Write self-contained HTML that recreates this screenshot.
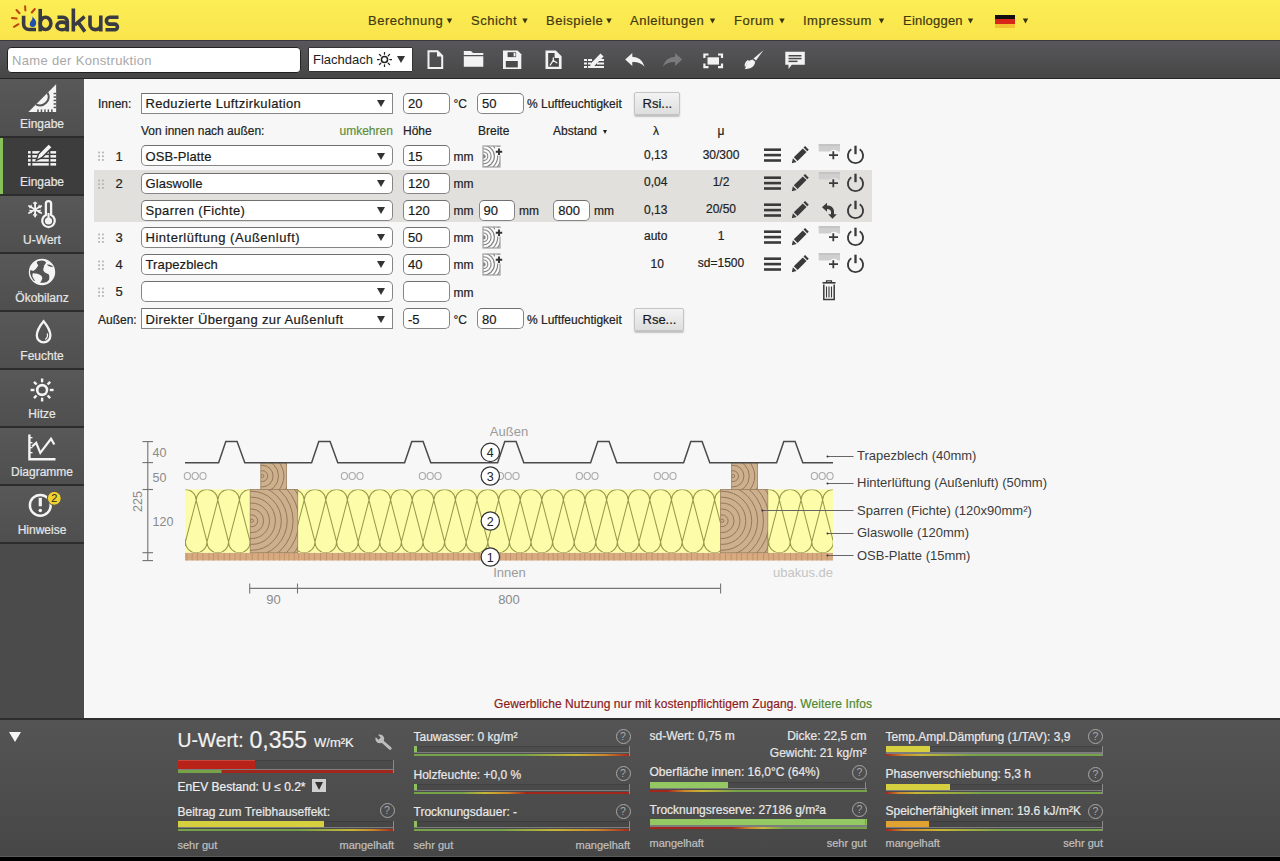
<!DOCTYPE html>
<html><head><meta charset="utf-8">
<style>
*{margin:0;padding:0;box-sizing:border-box}
html,body{width:1280px;height:861px;overflow:hidden;background:#000;font-family:"Liberation Sans",sans-serif}
.a{position:absolute}
#hdr{left:0;top:0;width:1280px;height:40px;background:linear-gradient(#fdee56,#f9e44b)}
#tb{left:0;top:40px;width:1280px;height:39px;background:linear-gradient(#58565a,#464646);border-top:1px solid #38383f;border-bottom:1.2px solid #252525}
#side{left:0;top:79px;width:84px;height:640px;background:#4b4b4b}
#main{left:84px;top:79px;width:1196px;height:640px;background:#f7f7f7}
#bot{left:0;top:718px;width:1280px;height:138.5px;background:linear-gradient(#545454,#474747);border-top:2px solid #2e2e2e;border-bottom:1px solid #5a5a5a}
.menu{top:13px;font-size:13px;line-height:16px;color:#3f3a12;white-space:nowrap;letter-spacing:0.5px}
.tri{display:inline-block;width:0;height:0;border-left:2.5px solid transparent;border-right:2.5px solid transparent;border-top:4.5px solid #3f3a12}
.sl{left:0;width:84px;text-align:center;font-size:12px;line-height:14px;color:#e6e6e6}
.t{white-space:nowrap}
.sel{background:#fff;border:1.6px solid #858585;border-top-color:#707070}
.inp{background:#fff;border:1.6px solid #858585;border-top-color:#707070;border-radius:5px}
.arr{width:0;height:0;border-left:4px solid transparent;border-right:4px solid transparent;border-top:7px solid #333}
.tri2{width:0;height:0;border-left:2.7px solid transparent;border-right:2.7px solid transparent;border-top:4.5px solid #222}
.btn{background:linear-gradient(#f3f3f3,#dedede);border:1px solid #c4c4c4;border-radius:2px;box-shadow:0 1.5px 1.5px rgba(0,0,0,.22)}
.qm{width:15px;height:15px;border:1.3px solid #a8a8a8;border-radius:50%;color:#a8a8a8;font-size:10.5px;line-height:13px;text-align:center}
.t,.menu,.sl{-webkit-text-stroke:0.2px currentColor}

</style></head><body>
<div id="hdr" class="a">
<svg class="a" style="left:0;top:0" width="130" height="40" viewBox="0 0 130 40">
<g stroke="#bd430f" stroke-width="2" stroke-linecap="round">
<line x1="12" y1="18" x2="16.7" y2="18.4"/>
<line x1="16.5" y1="10" x2="19.5" y2="13.2"/>
<line x1="25.1" y1="6.3" x2="25.4" y2="10.4"/>
<line x1="34.8" y1="9" x2="31.8" y2="12.5"/>
<line x1="14" y1="26.8" x2="18.5" y2="24.2"/>
</g>
<g fill="none" stroke="#3a3a42" stroke-width="3.6">
<path d="M23.6 15.8 V24 A5.55 5.55 0 0 0 29.15 29.55 H36"/>
<path d="M40.2 8.9 V31.4"/>
<ellipse cx="45.55" cy="23.4" rx="5.35" ry="6.15"/>
<path d="M57.5 17.3 H63 A4.3 4.3 0 0 1 67.3 21.6 V31.6"/>
<ellipse cx="62.1" cy="25.95" rx="5.2" ry="3.85"/>
<path d="M73.35 8.5 V31.6 M74.8 25 L84.6 16.6 M78.2 22.2 L84.9 31.6"/>
<path d="M90 15.5 V24.8 A5.4 4.8 0 0 0 100.8 24.8 V15.5 M100.8 15.5 V31.6"/>
<path d="M118.5 17.3 H109.8 A3.4 3.4 0 0 0 109.8 24.1 H114.6 A2.85 2.85 0 0 1 114.6 29.8 H105.5"/>
</g>
<path d="M32.3 16.4 Q36.8 20.3 36.1 23.8 Q35.5 27 32.6 27 Q29.6 26.8 29.8 24 Q30 21.7 31.9 19.8 Q32.9 18.3 32.3 16.4 Z" fill="#2150ae"/>
</svg>
<div class="a menu" style="left:368px">Berechnung</div>
<div class="a menu" style="left:471px">Schicht</div>
<div class="a menu" style="left:546px">Beispiele</div>
<div class="a menu" style="left:630px">Anleitungen</div>
<div class="a menu" style="left:734px">Forum</div>
<div class="a menu" style="left:803px">Impressum</div>
<div class="a menu" style="left:903px;letter-spacing:0.22px">Einloggen</div>
<div class="a" style="left:995px;top:15px;width:20px;height:13px;background:linear-gradient(#111 0,#111 33%,#d62718 33%,#d62718 66%,#f2c230 66%)"></div>


<svg class="a" style="left:0;top:0" width="1280" height="40" viewBox="0 0 1280 40"><g fill="#3a3510"><path d="M446.8 18.6 H452.2 L449.5 23.4Z"/><path d="M522.3 18.6 H527.7 L525.0 23.4Z"/><path d="M606.3 18.6 H611.7 L609.0 23.4Z"/><path d="M709.8 18.6 H715.2 L712.5 23.4Z"/><path d="M779.3 18.6 H784.7 L782.0 23.4Z"/><path d="M878.8 18.6 H884.2 L881.5 23.4Z"/><path d="M967.8 18.6 H973.2 L970.5 23.4Z"/><path d="M1022.8 18.6 H1028.2 L1025.5 23.4Z"/></g></svg>
</div>
<div id="tb" class="a"></div>
<div class="a" style="left:7px;top:47px;width:294px;height:26px;background:#fff;border:1px solid #222;border-radius:4px;font-size:13px;color:#a8a8a8;padding:5px 0 0 4px;letter-spacing:0.33px;line-height:16px">Name der Konstruktion</div>
<div class="a" style="left:308px;top:47px;width:105px;height:25px;background:#fff;border:1px solid #333;border-radius:1px;font-size:13px;color:#222;padding:4px 0 0 4px;line-height:16px">Flachdach</div>
<svg class="a" style="left:377px;top:52.2px" width="15" height="15" viewBox="1.2 1.2 15.6 15.6"><g stroke="#222" stroke-width="1.3" stroke-linecap="round"><circle cx="9" cy="9" r="3.2" fill="none" stroke-width="1.6"/><line x1="9" y1="1.5" x2="9" y2="3.5"/><line x1="9" y1="14.5" x2="9" y2="16.5"/><line x1="1.5" y1="9" x2="3.5" y2="9"/><line x1="14.5" y1="9" x2="16.5" y2="9"/><line x1="3.7" y1="3.7" x2="5.1" y2="5.1"/><line x1="12.9" y1="12.9" x2="14.3" y2="14.3"/><line x1="3.7" y1="14.3" x2="5.1" y2="12.9"/><line x1="12.9" y1="5.1" x2="14.3" y2="3.7"/></g></svg>
<div class="a" style="left:397px;top:56px;width:0;height:0;border-left:4px solid transparent;border-right:4px solid transparent;border-top:7px solid #333"></div>
<svg class="a" style="left:420px;top:44px" width="400" height="32" viewBox="420 44 400 32">
<g fill="none" stroke="#f2f2f2" stroke-width="2">
<path d="M428.5 51.2 H437.5 L442.2 55.9 V68 H428.5 Z"/>
</g>
<path d="M437 51.2 V56.5 H442.2" fill="#f2f2f2"/>
<path d="M463.8 51 H471 L473 53 H483.3 V55 H463.8Z M463.8 56.3 H483.3 V66.7 H463.8Z" fill="#f2f2f2"/>
<path d="M503 50.5 H517.6 L521.3 54.2 V69 H503 Z" fill="#f2f2f2"/><rect x="507.6" y="52.2" width="8.5" height="4.9" fill="#4a4a4a"/><rect x="513.6" y="52.8" width="1.9" height="3.6" fill="#f2f2f2"/><rect x="505.8" y="61" width="12" height="6.4" fill="#4a4a4a"/>
<path d="M545.5 50.5 H555.8 L561.6 56.3 V69 H545.5 Z" fill="#f2f2f2"/><path d="M548.2 53 H554.6 V58 H558.9 V66.8 H548.2 Z" fill="#4a4a4a"/>
<path d="M550.3 65 L553.5 59.8 M553.3 58 V60.5 L556.8 62.8" fill="none" stroke="#f2f2f2" stroke-width="1.3" stroke-linecap="round"/>
<g fill="#f2f2f2">
<rect x="584" y="59" width="3" height="2"/><rect x="588" y="59" width="4" height="2"/><rect x="597" y="59" width="7" height="2"/>
<rect x="584" y="62.5" width="3" height="2"/><rect x="588" y="62.5" width="3" height="2"/><rect x="597" y="62.5" width="7" height="2"/>
<rect x="584" y="66" width="3" height="2"/><rect x="588" y="66" width="16" height="2"/>
<path d="M600.5 53.4 L603.6 56.5 L594 66.2 L589.5 67.8 L591 63.2 Z"/>
</g>
<path d="M625.2 59.5 L632.3 53 V56.8 Q641.5 57 644.7 66.7 Q640 61.5 632.3 62 V66 Z" fill="#f2f2f2"/>
<path d="M682.2 59.5 L675.1 53 V56.8 Q665.9 57 662.7 66.7 Q667.4 61.5 675.1 62 V66 Z" fill="#7b7b7b"/>
<g fill="none" stroke="#f2f2f2" stroke-width="2.2">
<path d="M704.4 58 V54.5 H708.5 M718 54.5 H722 V58 M722 63.5 V67.2 H718 M708.5 67.2 H704.4 V63.5"/>
</g>
<rect x="707.5" y="57.3" width="11.5" height="7.3" fill="#f2f2f2"/>
<path d="M763.4 50.2 L756 60.5 L753.5 58.5 Z" fill="#f2f2f2"/>
<path d="M752.5 59.5 L755.2 61.7 Q754.7 66.3 750 68.2 Q746 69.5 744.8 68.7 Q746.3 67.4 746.2 65 Q746.3 61.2 752.5 59.5Z" fill="#f2f2f2"/>
<path d="M748.5 60.5 Q745 63 745.5 66.5" fill="none" stroke="#f2f2f2" stroke-width="1.6"/>
<path d="M785.3 51.8 H804.8 V64.8 H791.8 L788.5 69 V64.8 H785.3 Z" fill="#f2f2f2"/>
<g fill="#484848"><rect x="788.5" y="55" width="13" height="1.5"/><rect x="788.5" y="57.8" width="13" height="1.5"/><rect x="788.5" y="60.6" width="9" height="1.5"/></g>
</svg>
<div id="side" class="a"></div>
<div id="main" class="a"></div><div class="a" style="left:84px;top:79px;width:1px;height:639px;background:#fbfbfb"></div><div class="a" style="left:0;top:79px;width:84px;height:57px;background:linear-gradient(#585858,#4f4f4f)"></div><div class="a" style="left:0;top:196px;width:84px;height:56px;background:linear-gradient(#585858,#4f4f4f)"></div><div class="a" style="left:0;top:254px;width:84px;height:56px;background:linear-gradient(#585858,#4f4f4f)"></div><div class="a" style="left:0;top:312px;width:84px;height:56px;background:linear-gradient(#585858,#4f4f4f)"></div><div class="a" style="left:0;top:370px;width:84px;height:56px;background:linear-gradient(#585858,#4f4f4f)"></div><div class="a" style="left:0;top:428px;width:84px;height:56px;background:linear-gradient(#585858,#4f4f4f)"></div><div class="a" style="left:0;top:486px;width:84px;height:56px;background:linear-gradient(#585858,#4f4f4f)"></div><div class="a" style="left:0;top:544px;width:84px;height:175px;background:#4b4b4b"></div>
<div class="a" style="left:0;top:136px;width:84px;height:2px;background:#2c2c2c"></div>
<div class="a" style="left:0;top:138px;width:84px;height:56px;background:#3d3d3d"></div>
<div class="a" style="left:0;top:138px;width:3px;height:56px;background:#86c15a"></div>
<div class="a" style="left:0;top:194px;width:84px;height:2px;background:#2c2c2c"></div>
<div class="a" style="left:0;top:252px;width:84px;height:2px;background:#2c2c2c"></div>
<div class="a" style="left:0;top:310px;width:84px;height:2px;background:#2c2c2c"></div>
<div class="a" style="left:0;top:368px;width:84px;height:2px;background:#2c2c2c"></div>
<div class="a" style="left:0;top:426px;width:84px;height:2px;background:#2c2c2c"></div>
<div class="a" style="left:0;top:484px;width:84px;height:2px;background:#2c2c2c"></div>
<div class="a" style="left:0;top:542px;width:84px;height:2px;background:#2c2c2c"></div>
<div class="a sl" style="top:117px">Eingabe</div>
<div class="a sl" style="top:175px">Eingabe</div>
<div class="a sl" style="top:233px">U-Wert</div>
<div class="a sl" style="top:291px">Ökobilanz</div>
<div class="a sl" style="top:349px">Feuchte</div>
<div class="a sl" style="top:407px">Hitze</div>
<div class="a sl" style="top:465px">Diagramme</div>
<div class="a sl" style="top:523px">Hinweise</div>
<svg class="a" style="left:0;top:79px" width="84" height="470" viewBox="0 79 84 470">
<g fill="#f4f4f4">
<path d="M56.1 84.2 V111.9 H28.4 Z"/>
</g>
<path d="M36 104.3 A8.6 8.6 0 0 0 47.6 92.7" fill="none" stroke="#555" stroke-width="2"/>
<g fill="#555"><rect x="37.2" y="109.4" width="1.5" height="2.6"/><rect x="40.7" y="109.4" width="1.5" height="2.6"/><rect x="44.2" y="109.4" width="1.5" height="2.6"/><rect x="47.6" y="109.4" width="1.5" height="2.6"/><rect x="51.1" y="109.4" width="1.5" height="2.6"/><rect x="53.6" y="92.8" width="2.6" height="1.5"/><rect x="53.6" y="96.3" width="2.6" height="1.5"/><rect x="53.6" y="99.7" width="2.6" height="1.5"/><rect x="53.6" y="103.2" width="2.6" height="1.5"/><rect x="53.6" y="106.7" width="2.6" height="1.5"/></g>
<g fill="#f4f4f4">
<rect x="28" y="151.1" width="2.7" height="2.5"/><rect x="32.3" y="151.1" width="16.5" height="2.5"/><rect x="50.4" y="151.1" width="5.7" height="2.5"/><rect x="28" y="155.1" width="2.7" height="2.5"/><rect x="32.3" y="155.1" width="16.5" height="2.5"/><rect x="50.4" y="155.1" width="5.7" height="2.5"/><rect x="28" y="159.1" width="2.7" height="2.5"/><rect x="32.3" y="159.1" width="16.5" height="2.5"/><rect x="50.4" y="159.1" width="5.7" height="2.5"/><rect x="28" y="163.1" width="2.7" height="2.5"/><rect x="32.3" y="163.1" width="16.5" height="2.5"/><rect x="50.4" y="163.1" width="5.7" height="2.5"/><path d="M48.66 143.66 L52.34 147.34 L42.34 157.34 L36.2 160.3 L38.66 153.66 Z" stroke="#3d3d3d" stroke-width="1.4"/></g>
<g stroke="#f4f4f4" stroke-width="1.8" stroke-linecap="round">
<line x1="35.1" y1="202.5" x2="35.1" y2="216.5"/><line x1="29" y1="206" x2="41.2" y2="213"/><line x1="29" y1="213" x2="41.2" y2="206"/>
<path d="M33.4 202.8 L35.1 204.5 L36.8 202.8 M33.4 215.2 L35.1 213.5 L36.8 215.2 M29.6 207.8 L31.8 207.4 L31 205.3 M40.6 210.2 L38.4 210.6 L39.2 212.7 M29.6 210.2 L31.8 210.6 L31 212.7 M40.6 207.8 L38.4 207.4 L39.2 205.3" fill="none" stroke-width="1.1"/>
</g>
<path d="M45.9 215 V203.8 A2.6 2.6 0 0 1 51.1 203.8 V215 A6.3 6.3 0 1 1 45.9 215 Z" fill="none" stroke="#f4f4f4" stroke-width="2.3"/>
<circle cx="48.5" cy="221" r="3.6" fill="#f4f4f4"/><rect x="47.4" y="213" width="2.2" height="5" fill="#f4f4f4"/>
<circle cx="42" cy="272" r="13.2" fill="#f4f4f4"/>
<path d="M37.52 261.20 L41.61 260.46 L44.59 261.02 L46.07 262.51 L45.33 263.99 L44.22 265.29 L43.84 267.15 L43.29 268.64 L43.47 270.87 L44.59 272.36 L46.82 273.47 L48.68 274.22 L49.42 276.82 L49.05 279.79 L46.82 282.02 L43.84 282.77 L40.13 282.77 L41.61 280.16 L42.36 278.30 L41.61 276.07 L39.38 274.59 L36.41 273.47 L34.18 273.47 L32.69 272.73 L33.43 270.87 L35.29 269.38 L37.15 267.15 L38.27 265.29 L37.15 263.81 L36.78 262.32Z M30.09 270.50 L31.95 270.13 L33.43 271.61 L32.69 273.84 L32.32 276.07 L33.81 279.05 L35.29 281.28 L33.43 280.54 L31.20 276.82 L30.09 273.47Z M46.82 264.55 L49.79 264.74 L52.39 266.04 L52.77 267.15 L50.54 266.78 L48.30 266.04Z" fill="#545454"/>
<path d="M43.6 321.2 Q36.8 329.5 36.8 335.6 A6.8 6.8 0 0 0 50.4 335.6 Q50.4 329.5 43.6 321.2Z" fill="none" stroke="#f4f4f4" stroke-width="2.3"/>
<path d="M47.3 333.5 Q48.3 337 45.3 339.5" fill="none" stroke="#f4f4f4" stroke-width="1.3"/>
<circle cx="42.1" cy="390" r="4.9" fill="none" stroke="#f4f4f4" stroke-width="2.6"/>
<g stroke="#f4f4f4" stroke-width="2.4" stroke-linecap="butt">
<line x1="42.1" y1="378.5" x2="42.1" y2="382.3"/><line x1="42.1" y1="397.7" x2="42.1" y2="401.5"/>
<line x1="30.6" y1="390" x2="34.4" y2="390"/><line x1="49.8" y1="390" x2="53.6" y2="390"/>
<line x1="34" y1="381.9" x2="36.6" y2="384.5"/><line x1="47.6" y1="395.5" x2="50.2" y2="398.1"/>
<line x1="34" y1="398.1" x2="36.6" y2="395.5"/><line x1="47.6" y1="384.5" x2="50.2" y2="381.9"/>
</g>
<path d="M29.4 434.5 V459.3 H55.5" fill="none" stroke="#f4f4f4" stroke-width="2.4"/>
<g fill="#f4f4f4"><rect x="29" y="437" width="3.5" height="1.3"/><rect x="29" y="442" width="3.5" height="1.3"/><rect x="29" y="447" width="3.5" height="1.3"/><rect x="29" y="452" width="3.5" height="1.3"/></g>
<path d="M32 446.5 L36.2 442.8 L40.3 452.8 L51 438.8 L54.3 444.5" fill="none" stroke="#f4f4f4" stroke-width="2.2" stroke-linejoin="miter"/>
<circle cx="40.3" cy="505.3" r="10.4" fill="none" stroke="#f4f4f4" stroke-width="2.5"/>
<rect x="38.7" y="497.8" width="3.2" height="8.5" fill="#f4f4f4"/><circle cx="40.3" cy="510.5" r="1.8" fill="#f4f4f4"/>
<circle cx="54.3" cy="498.3" r="6.9" fill="#f0d22e" stroke="#505050" stroke-width="1"/>
<text x="54.3" y="502.3" font-family="Liberation Sans" font-size="11" fill="#2a2a2a" text-anchor="middle">2</text>
</svg>
<div class="a" style="left:94px;top:169.5px;width:778px;height:52.5px;background:#e1e0dc"></div>
<div class="a t" style="left:98px;top:98.44px;font-size:12px;line-height:13.8px;color:#222;">Innen:</div>
<div class="a sel" style="left:141px;top:92.5px;width:252px;height:21px;border-radius:1px"></div>
<div class="a t" style="left:145.5px;top:97.02px;font-size:13px;line-height:14.95px;color:#1a1a1a;letter-spacing:0.34px">Reduzierte Luftzirkulation</div>
<div class="a arr" style="left:376.7px;top:99.8px"></div>
<div class="a inp" style="left:403px;top:92.5px;width:47px;height:21px"></div>
<div class="a t" style="left:408px;top:97.02px;font-size:13px;line-height:14.95px;color:#1a1a1a;">20</div>
<div class="a t" style="left:453.5px;top:98.44px;font-size:12px;line-height:13.8px;color:#222;">°C</div>
<div class="a inp" style="left:477px;top:92.5px;width:46.5px;height:21px"></div>
<div class="a t" style="left:482px;top:97.02px;font-size:13px;line-height:14.95px;color:#1a1a1a;">50</div>
<div class="a t" style="left:527px;top:98.44px;font-size:12px;line-height:13.8px;color:#222;">% Luftfeuchtigkeit</div>
<div class="a btn" style="left:633.5px;top:91.5px;width:46px;height:23px"></div>
<div class="a t" style="left:642.5px;top:97.22px;font-size:13px;line-height:14.95px;color:#1a1a1a;">Rsi...</div>
<div class="a t" style="left:141px;top:125.24px;font-size:12px;line-height:13.8px;color:#222;">Von innen nach außen:</div>
<div class="a t" style="left:339.5px;top:125.24px;font-size:12px;line-height:13.8px;color:#5d8f3e;">umkehren</div>
<div class="a t" style="left:403px;top:125.24px;font-size:12px;line-height:13.8px;color:#222;">Höhe</div>
<div class="a t" style="left:478px;top:125.24px;font-size:12px;line-height:13.8px;color:#222;">Breite</div>
<div class="a t" style="left:553px;top:125.24px;font-size:12px;line-height:13.8px;color:#222;">Abstand</div>
<div class="a tri2" style="left:602.5px;top:129.5px"></div>
<div class="a t" style="left:653px;top:125.24px;font-size:12px;line-height:13.8px;color:#222;">λ</div>
<div class="a t" style="left:717.5px;top:125.24px;font-size:12px;line-height:13.8px;color:#222;">μ</div>
<svg class="a" style="left:97px;top:150.3px" width="8" height="12"><g fill="#b5b5b5"><rect x="1.2" y="1.6" width="1.8" height="1.8"/><rect x="5" y="1.6" width="1.8" height="1.8"/><rect x="1.2" y="5.3" width="1.8" height="1.8"/><rect x="5" y="5.3" width="1.8" height="1.8"/><rect x="1.2" y="9" width="1.8" height="1.8"/><rect x="5" y="9" width="1.8" height="1.8"/></g></svg>
<div class="a t" style="left:115.5px;top:149.62px;font-size:13px;line-height:14.95px;color:#222;">1</div>
<div class="a sel" style="left:141px;top:145.3px;width:252px;height:21px;border-radius:5px"></div>
<div class="a t" style="left:145.5px;top:149.82px;font-size:13px;line-height:14.95px;color:#1a1a1a;letter-spacing:0.1px">OSB-Platte</div>
<div class="a arr" style="left:376.7px;top:152.60000000000002px"></div>
<div class="a inp" style="left:403px;top:145.3px;width:47px;height:21px"></div>
<div class="a t" style="left:408px;top:149.82px;font-size:13px;line-height:14.95px;color:#1a1a1a;">15</div>
<div class="a t" style="left:453.5px;top:150.84px;font-size:12px;line-height:13.8px;color:#222;">mm</div>
<svg class="a" style="left:482px;top:144.8px" width="22" height="23" viewBox="0 0 22 23"><defs><clipPath id="wc1145"><rect x="1" y="1" width="17" height="21"/></clipPath></defs><rect x="1" y="1" width="17" height="21" fill="#fbfbfb"/><g clip-path="url(#wc1145)" fill="none" stroke="#858585" stroke-width="1.15"><circle cx="1.5" cy="11.3" r="1.6" fill="#858585"/><circle cx="1.5" cy="11.3" r="4.3"/><circle cx="1.5" cy="11.3" r="7.6"/><circle cx="1.5" cy="11.3" r="10.9"/><circle cx="1.5" cy="11.3" r="14.2"/><circle cx="1.5" cy="11.3" r="17.5"/><circle cx="1.5" cy="11.3" r="20.8"/></g><rect x="1" y="1" width="17" height="21" fill="none" stroke="#9a9a9a" stroke-width="1.1"/><rect x="13" y="2" width="9" height="8.5" fill="#f7f7f7"/><path d="M17 3.5 V10 M13.8 6.7 H20.2" stroke="#333" stroke-width="1.9"/></svg>
<div class="a t" style="left:644.0px;top:149.14px;font-size:12px;line-height:13.8px;color:#222;">0,13</div>
<div class="a t" style="left:681px;width:80px;text-align:center;top:149.04px;font-size:12px;line-height:13.8px;color:#222">30/300</div>
<svg class="a" style="left:760px;top:144.3px" width="110" height="24" viewBox="760 144.3 110 24"><g fill="#3a3a3a" transform="translate(0,0.0)"><rect x="764" y="148.7" width="17" height="2.6"/><rect x="764" y="154.1" width="17" height="2.6"/><rect x="764" y="159.5" width="17" height="2.6"/><g transform="translate(0.6,0)"><path d="M804.5 146.3 L808.2 150 L806.6 151.6 L802.9 147.9Z"/><path d="M802.2 148.7 L805.9 152.4 L797 161.2 L793.2 157.5Z"/><path d="M792.3 158.5 L796 162.2 L791.2 163.5Z"/></g></g><g transform="translate(0,0.0)"><rect x="818.7" y="144.6" width="21.3" height="7.2" fill="#cfcfcf"/><rect x="818.7" y="144.6" width="21.3" height="1.3" fill="#bdbdbd"/><circle cx="834" cy="155" r="5" fill="#f7f7f7"/><path d="M833.3 151.5 V159.5 M829 155.5 H838" stroke="#3a3a3a" stroke-width="1.8"/></g><g transform="translate(0,0.0)" fill="none" stroke="#3a3a3a"><path d="M851.3 149.5 A7.6 7.6 0 1 0 859.7 149.5" stroke-width="1.9"/><path d="M855.5 146 V154.5" stroke-width="2.3"/></g></svg>
<svg class="a" style="left:97px;top:177.5px" width="8" height="12"><g fill="#b5b5b5"><rect x="1.2" y="1.6" width="1.8" height="1.8"/><rect x="5" y="1.6" width="1.8" height="1.8"/><rect x="1.2" y="5.3" width="1.8" height="1.8"/><rect x="5" y="5.3" width="1.8" height="1.8"/><rect x="1.2" y="9" width="1.8" height="1.8"/><rect x="5" y="9" width="1.8" height="1.8"/></g></svg>
<div class="a t" style="left:115.5px;top:176.82px;font-size:13px;line-height:14.95px;color:#222;">2</div>
<div class="a sel" style="left:141px;top:172.5px;width:252px;height:21px;border-radius:5px"></div>
<div class="a t" style="left:145.5px;top:177.02px;font-size:13px;line-height:14.95px;color:#1a1a1a;letter-spacing:0.07px">Glaswolle</div>
<div class="a arr" style="left:376.7px;top:179.8px"></div>
<div class="a inp" style="left:403px;top:172.5px;width:47px;height:21px"></div>
<div class="a t" style="left:408px;top:177.02px;font-size:13px;line-height:14.95px;color:#1a1a1a;">120</div>
<div class="a t" style="left:453.5px;top:178.04px;font-size:12px;line-height:13.8px;color:#222;">mm</div>
<div class="a t" style="left:644.0px;top:176.34px;font-size:12px;line-height:13.8px;color:#222;">0,04</div>
<div class="a t" style="left:681px;width:80px;text-align:center;top:176.24px;font-size:12px;line-height:13.8px;color:#222">1/2</div>
<svg class="a" style="left:760px;top:171.5px" width="110" height="24" viewBox="760 171.5 110 24"><g fill="#3a3a3a" transform="translate(0,27.19999999999999)"><rect x="764" y="148.7" width="17" height="2.6"/><rect x="764" y="154.1" width="17" height="2.6"/><rect x="764" y="159.5" width="17" height="2.6"/><g transform="translate(0.6,0)"><path d="M804.5 146.3 L808.2 150 L806.6 151.6 L802.9 147.9Z"/><path d="M802.2 148.7 L805.9 152.4 L797 161.2 L793.2 157.5Z"/><path d="M792.3 158.5 L796 162.2 L791.2 163.5Z"/></g></g><g transform="translate(0,27.19999999999999)"><rect x="818.7" y="144.6" width="21.3" height="7.2" fill="#cfcfcf"/><rect x="818.7" y="144.6" width="21.3" height="1.3" fill="#bdbdbd"/><circle cx="834" cy="155" r="5" fill="#e1e0dc"/><path d="M833.3 151.5 V159.5 M829 155.5 H838" stroke="#3a3a3a" stroke-width="1.8"/></g><g transform="translate(0,27.19999999999999)" fill="none" stroke="#3a3a3a"><path d="M851.3 149.5 A7.6 7.6 0 1 0 859.7 149.5" stroke-width="1.9"/><path d="M855.5 146 V154.5" stroke-width="2.3"/></g></svg>
<div class="a sel" style="left:141px;top:199.7px;width:252px;height:21px;border-radius:5px"></div>
<div class="a t" style="left:145.5px;top:204.22px;font-size:13px;line-height:14.95px;color:#1a1a1a;letter-spacing:0.36px">Sparren (Fichte)</div>
<div class="a arr" style="left:376.7px;top:207.0px"></div>
<div class="a inp" style="left:403px;top:199.7px;width:47px;height:21px"></div>
<div class="a t" style="left:408px;top:204.22px;font-size:13px;line-height:14.95px;color:#1a1a1a;">120</div>
<div class="a t" style="left:453.5px;top:205.24px;font-size:12px;line-height:13.8px;color:#222;">mm</div>
<div class="a t" style="left:644.0px;top:203.54px;font-size:12px;line-height:13.8px;color:#222;">0,13</div>
<div class="a t" style="left:681px;width:80px;text-align:center;top:203.44px;font-size:12px;line-height:13.8px;color:#222">20/50</div>
<svg class="a" style="left:760px;top:198.7px" width="110" height="24" viewBox="760 198.7 110 24"><g fill="#3a3a3a" transform="translate(0,54.39999999999998)"><rect x="764" y="148.7" width="17" height="2.6"/><rect x="764" y="154.1" width="17" height="2.6"/><rect x="764" y="159.5" width="17" height="2.6"/><g transform="translate(0.6,0)"><path d="M804.5 146.3 L808.2 150 L806.6 151.6 L802.9 147.9Z"/><path d="M802.2 148.7 L805.9 152.4 L797 161.2 L793.2 157.5Z"/><path d="M792.3 158.5 L796 162.2 L791.2 163.5Z"/></g></g><g transform="translate(0,54.39999999999998)"><path d="M822 152.5 L827 148 V150.8 Q833 150.8 834 156 V159.5 H836.8 L832.5 164 L828.2 159.5 H831 V156.8 Q830.5 154.3 827 154.2 V157 Z" fill="#3a3a3a"/></g><g transform="translate(0,54.39999999999998)" fill="none" stroke="#3a3a3a"><path d="M851.3 149.5 A7.6 7.6 0 1 0 859.7 149.5" stroke-width="1.9"/><path d="M855.5 146 V154.5" stroke-width="2.3"/></g></svg>
<svg class="a" style="left:97px;top:231.5px" width="8" height="12"><g fill="#b5b5b5"><rect x="1.2" y="1.6" width="1.8" height="1.8"/><rect x="5" y="1.6" width="1.8" height="1.8"/><rect x="1.2" y="5.3" width="1.8" height="1.8"/><rect x="5" y="5.3" width="1.8" height="1.8"/><rect x="1.2" y="9" width="1.8" height="1.8"/><rect x="5" y="9" width="1.8" height="1.8"/></g></svg>
<div class="a t" style="left:115.5px;top:230.82px;font-size:13px;line-height:14.95px;color:#222;">3</div>
<div class="a sel" style="left:141px;top:226.5px;width:252px;height:21px;border-radius:5px"></div>
<div class="a t" style="left:145.5px;top:231.02px;font-size:13px;line-height:14.95px;color:#1a1a1a;letter-spacing:0.52px">Hinterlüftung (Außenluft)</div>
<div class="a arr" style="left:376.7px;top:233.8px"></div>
<div class="a inp" style="left:403px;top:226.5px;width:47px;height:21px"></div>
<div class="a t" style="left:408px;top:231.02px;font-size:13px;line-height:14.95px;color:#1a1a1a;">50</div>
<div class="a t" style="left:453.5px;top:232.04px;font-size:12px;line-height:13.8px;color:#222;">mm</div>
<svg class="a" style="left:482px;top:226.0px" width="22" height="23" viewBox="0 0 22 23"><defs><clipPath id="wc3226"><rect x="1" y="1" width="17" height="21"/></clipPath></defs><rect x="1" y="1" width="17" height="21" fill="#fbfbfb"/><g clip-path="url(#wc3226)" fill="none" stroke="#858585" stroke-width="1.15"><circle cx="1.5" cy="11.3" r="1.6" fill="#858585"/><circle cx="1.5" cy="11.3" r="4.3"/><circle cx="1.5" cy="11.3" r="7.6"/><circle cx="1.5" cy="11.3" r="10.9"/><circle cx="1.5" cy="11.3" r="14.2"/><circle cx="1.5" cy="11.3" r="17.5"/><circle cx="1.5" cy="11.3" r="20.8"/></g><rect x="1" y="1" width="17" height="21" fill="none" stroke="#9a9a9a" stroke-width="1.1"/><rect x="13" y="2" width="9" height="8.5" fill="#f7f7f7"/><path d="M17 3.5 V10 M13.8 6.7 H20.2" stroke="#333" stroke-width="1.9"/></svg>
<div class="a t" style="left:644.0px;top:230.34px;font-size:12px;line-height:13.8px;color:#222;">auto</div>
<div class="a t" style="left:681px;width:80px;text-align:center;top:230.24px;font-size:12px;line-height:13.8px;color:#222">1</div>
<svg class="a" style="left:760px;top:225.5px" width="110" height="24" viewBox="760 225.5 110 24"><g fill="#3a3a3a" transform="translate(0,81.19999999999999)"><rect x="764" y="148.7" width="17" height="2.6"/><rect x="764" y="154.1" width="17" height="2.6"/><rect x="764" y="159.5" width="17" height="2.6"/><g transform="translate(0.6,0)"><path d="M804.5 146.3 L808.2 150 L806.6 151.6 L802.9 147.9Z"/><path d="M802.2 148.7 L805.9 152.4 L797 161.2 L793.2 157.5Z"/><path d="M792.3 158.5 L796 162.2 L791.2 163.5Z"/></g></g><g transform="translate(0,81.19999999999999)"><rect x="818.7" y="144.6" width="21.3" height="7.2" fill="#cfcfcf"/><rect x="818.7" y="144.6" width="21.3" height="1.3" fill="#bdbdbd"/><circle cx="834" cy="155" r="5" fill="#f7f7f7"/><path d="M833.3 151.5 V159.5 M829 155.5 H838" stroke="#3a3a3a" stroke-width="1.8"/></g><g transform="translate(0,81.19999999999999)" fill="none" stroke="#3a3a3a"><path d="M851.3 149.5 A7.6 7.6 0 1 0 859.7 149.5" stroke-width="1.9"/><path d="M855.5 146 V154.5" stroke-width="2.3"/></g></svg>
<svg class="a" style="left:97px;top:258.7px" width="8" height="12"><g fill="#b5b5b5"><rect x="1.2" y="1.6" width="1.8" height="1.8"/><rect x="5" y="1.6" width="1.8" height="1.8"/><rect x="1.2" y="5.3" width="1.8" height="1.8"/><rect x="5" y="5.3" width="1.8" height="1.8"/><rect x="1.2" y="9" width="1.8" height="1.8"/><rect x="5" y="9" width="1.8" height="1.8"/></g></svg>
<div class="a t" style="left:115.5px;top:258.02px;font-size:13px;line-height:14.95px;color:#222;">4</div>
<div class="a sel" style="left:141px;top:253.7px;width:252px;height:21px;border-radius:5px"></div>
<div class="a t" style="left:145.5px;top:258.22px;font-size:13px;line-height:14.95px;color:#1a1a1a;letter-spacing:0.12px">Trapezblech</div>
<div class="a arr" style="left:376.7px;top:261.0px"></div>
<div class="a inp" style="left:403px;top:253.7px;width:47px;height:21px"></div>
<div class="a t" style="left:408px;top:258.22px;font-size:13px;line-height:14.95px;color:#1a1a1a;">40</div>
<div class="a t" style="left:453.5px;top:259.24px;font-size:12px;line-height:13.8px;color:#222;">mm</div>
<svg class="a" style="left:482px;top:253.2px" width="22" height="23" viewBox="0 0 22 23"><defs><clipPath id="wc4253"><rect x="1" y="1" width="17" height="21"/></clipPath></defs><rect x="1" y="1" width="17" height="21" fill="#fbfbfb"/><g clip-path="url(#wc4253)" fill="none" stroke="#858585" stroke-width="1.15"><circle cx="1.5" cy="11.3" r="1.6" fill="#858585"/><circle cx="1.5" cy="11.3" r="4.3"/><circle cx="1.5" cy="11.3" r="7.6"/><circle cx="1.5" cy="11.3" r="10.9"/><circle cx="1.5" cy="11.3" r="14.2"/><circle cx="1.5" cy="11.3" r="17.5"/><circle cx="1.5" cy="11.3" r="20.8"/></g><rect x="1" y="1" width="17" height="21" fill="none" stroke="#9a9a9a" stroke-width="1.1"/><rect x="13" y="2" width="9" height="8.5" fill="#f7f7f7"/><path d="M17 3.5 V10 M13.8 6.7 H20.2" stroke="#333" stroke-width="1.9"/></svg>
<div class="a t" style="left:650.5px;top:257.54px;font-size:12px;line-height:13.8px;color:#222;">10</div>
<div class="a t" style="left:681px;width:80px;text-align:center;top:257.44px;font-size:12px;line-height:13.8px;color:#222">sd=1500</div>
<svg class="a" style="left:760px;top:252.7px" width="110" height="24" viewBox="760 252.7 110 24"><g fill="#3a3a3a" transform="translate(0,108.39999999999998)"><rect x="764" y="148.7" width="17" height="2.6"/><rect x="764" y="154.1" width="17" height="2.6"/><rect x="764" y="159.5" width="17" height="2.6"/><g transform="translate(0.6,0)"><path d="M804.5 146.3 L808.2 150 L806.6 151.6 L802.9 147.9Z"/><path d="M802.2 148.7 L805.9 152.4 L797 161.2 L793.2 157.5Z"/><path d="M792.3 158.5 L796 162.2 L791.2 163.5Z"/></g></g><g transform="translate(0,108.39999999999998)"><rect x="818.7" y="144.6" width="21.3" height="7.2" fill="#cfcfcf"/><rect x="818.7" y="144.6" width="21.3" height="1.3" fill="#bdbdbd"/><circle cx="834" cy="155" r="5" fill="#f7f7f7"/><path d="M833.3 151.5 V159.5 M829 155.5 H838" stroke="#3a3a3a" stroke-width="1.8"/></g><g transform="translate(0,108.39999999999998)" fill="none" stroke="#3a3a3a"><path d="M851.3 149.5 A7.6 7.6 0 1 0 859.7 149.5" stroke-width="1.9"/><path d="M855.5 146 V154.5" stroke-width="2.3"/></g></svg>
<svg class="a" style="left:97px;top:286px" width="8" height="12"><g fill="#b5b5b5"><rect x="1.2" y="1.6" width="1.8" height="1.8"/><rect x="5" y="1.6" width="1.8" height="1.8"/><rect x="1.2" y="5.3" width="1.8" height="1.8"/><rect x="5" y="5.3" width="1.8" height="1.8"/><rect x="1.2" y="9" width="1.8" height="1.8"/><rect x="5" y="9" width="1.8" height="1.8"/></g></svg>
<div class="a t" style="left:115.5px;top:285.32px;font-size:13px;line-height:14.95px;color:#222;">5</div>
<div class="a sel" style="left:141px;top:281px;width:252px;height:21px;border-radius:5px"></div>
<div class="a arr" style="left:376.7px;top:288.3px"></div>
<div class="a inp" style="left:403px;top:281px;width:47px;height:21px"></div>
<div class="a t" style="left:453.5px;top:286.54px;font-size:12px;line-height:13.8px;color:#222;">mm</div>
<svg class="a" style="left:820px;top:279px" width="18" height="22" viewBox="0 0 18 22"><g fill="none" stroke="#3a3a3a"><path d="M2.5 3.8 H15.5" stroke-width="1.6"/><path d="M6.5 3.5 V1.8 H11.5 V3.5" stroke-width="1.2"/><path d="M3.8 5.5 V20.5 H14.2 V5.5" stroke-width="1.5"/><path d="M6.5 7.5 V18.5 M9 7.5 V18.5 M11.5 7.5 V18.5" stroke-width="1.1"/></g></svg>
<div class="a inp" style="left:478.5px;top:199.7px;width:36px;height:21px"></div>
<div class="a t" style="left:483.5px;top:204.22px;font-size:13px;line-height:14.95px;color:#1a1a1a;">90</div>
<div class="a t" style="left:519px;top:205.24px;font-size:12px;line-height:13.8px;color:#222;">mm</div>
<div class="a inp" style="left:553.3px;top:199.7px;width:36.5px;height:21px"></div>
<div class="a t" style="left:558.3px;top:204.22px;font-size:13px;line-height:14.95px;color:#1a1a1a;">800</div>
<div class="a t" style="left:594px;top:205.24px;font-size:12px;line-height:13.8px;color:#222;">mm</div>
<div class="a t" style="left:98px;top:314.44px;font-size:12px;line-height:13.8px;color:#222;">Außen:</div>
<div class="a sel" style="left:141px;top:308.4px;width:252px;height:21px;border-radius:1px"></div>
<div class="a t" style="left:145.5px;top:312.92px;font-size:13px;line-height:14.95px;color:#1a1a1a;letter-spacing:0.37px">Direkter Übergang zur Außenluft</div>
<div class="a arr" style="left:376.7px;top:315.7px"></div>
<div class="a inp" style="left:403px;top:308.4px;width:47px;height:21px"></div>
<div class="a t" style="left:408px;top:312.92px;font-size:13px;line-height:14.95px;color:#1a1a1a;">-5</div>
<div class="a t" style="left:453.5px;top:314.44px;font-size:12px;line-height:13.8px;color:#222;">°C</div>
<div class="a inp" style="left:477px;top:308.4px;width:46.5px;height:21px"></div>
<div class="a t" style="left:482px;top:312.92px;font-size:13px;line-height:14.95px;color:#1a1a1a;">80</div>
<div class="a t" style="left:527px;top:314.44px;font-size:12px;line-height:13.8px;color:#222;">% Luftfeuchtigkeit</div>
<div class="a btn" style="left:633.5px;top:307.5px;width:50.5px;height:23px"></div>
<div class="a t" style="left:642.5px;top:313.22px;font-size:13px;line-height:14.95px;color:#1a1a1a;">Rse...</div><svg class="a" style="left:0;top:0" width="1280" height="720" viewBox="0 0 1280 720">
<defs><clipPath id="cw"><rect x="185" y="489.4" width="648" height="63.3"/></clipPath></defs>
<g stroke="#707070" stroke-width="1.1"><line x1="147.8" y1="441.6" x2="147.8" y2="560.6"/>
<line x1="142.5" y1="441.6" x2="153" y2="441.6"/>
<line x1="142.5" y1="462.6" x2="153" y2="462.6"/>
<line x1="142.5" y1="489.5" x2="153" y2="489.5"/>
<line x1="142.5" y1="552.7" x2="153" y2="552.7"/>
<line x1="142.5" y1="560.6" x2="153" y2="560.6"/>
</g>
<g font-family="Liberation Sans" font-size="12.5" fill="#8a8a8a">
<text x="152.5" y="457.3">40</text><text x="152.5" y="481.8">50</text><text x="152.5" y="526.2">120</text>
<text transform="translate(141.6,501.5) rotate(-90)" text-anchor="middle">225</text>
</g>
<rect x="185" y="552.7" width="648" height="7.7999999999999545" fill="#d8aa80"/>
<g fill="#bf916a"><rect x="186.5" y="552.7" width="0.9" height="7.7999999999999545" /><rect x="191.7" y="552.7" width="0.9" height="7.7999999999999545" /><rect x="196.9" y="552.7" width="0.9" height="7.7999999999999545" /><rect x="202.5" y="552.7" width="0.9" height="7.7999999999999545" /><rect x="208.5" y="552.7" width="0.9" height="7.7999999999999545" /><rect x="213.1" y="552.7" width="0.9" height="7.7999999999999545" /><rect x="217.7" y="552.7" width="0.9" height="7.7999999999999545" /><rect x="223.7" y="552.7" width="0.9" height="7.7999999999999545" /><rect x="229.3" y="552.7" width="0.9" height="7.7999999999999545" /><rect x="234.5" y="552.7" width="0.9" height="7.7999999999999545" /><rect x="239.7" y="552.7" width="0.9" height="7.7999999999999545" /><rect x="245.7" y="552.7" width="0.9" height="7.7999999999999545" /><rect x="251.7" y="552.7" width="0.9" height="7.7999999999999545" /><rect x="257.7" y="552.7" width="0.9" height="7.7999999999999545" /><rect x="262.9" y="552.7" width="0.9" height="7.7999999999999545" /><rect x="268.1" y="552.7" width="0.9" height="7.7999999999999545" /><rect x="273.3" y="552.7" width="0.9" height="7.7999999999999545" /><rect x="279.3" y="552.7" width="0.9" height="7.7999999999999545" /><rect x="283.9" y="552.7" width="0.9" height="7.7999999999999545" /><rect x="288.5" y="552.7" width="0.9" height="7.7999999999999545" /><rect x="293.7" y="552.7" width="0.9" height="7.7999999999999545" /><rect x="298.3" y="552.7" width="0.9" height="7.7999999999999545" /><rect x="303.9" y="552.7" width="0.9" height="7.7999999999999545" /><rect x="308.5" y="552.7" width="0.9" height="7.7999999999999545" /><rect x="314.1" y="552.7" width="0.9" height="7.7999999999999545" /><rect x="320.1" y="552.7" width="0.9" height="7.7999999999999545" /><rect x="326.1" y="552.7" width="0.9" height="7.7999999999999545" /><rect x="332.1" y="552.7" width="0.9" height="7.7999999999999545" /><rect x="338.1" y="552.7" width="0.9" height="7.7999999999999545" /><rect x="344.1" y="552.7" width="0.9" height="7.7999999999999545" /><rect x="349.3" y="552.7" width="0.9" height="7.7999999999999545" /><rect x="354.9" y="552.7" width="0.9" height="7.7999999999999545" /><rect x="359.5" y="552.7" width="0.9" height="7.7999999999999545" /><rect x="364.1" y="552.7" width="0.9" height="7.7999999999999545" /><rect x="369.3" y="552.7" width="0.9" height="7.7999999999999545" /><rect x="375.3" y="552.7" width="0.9" height="7.7999999999999545" /><rect x="380.5" y="552.7" width="0.9" height="7.7999999999999545" /><rect x="386.1" y="552.7" width="0.9" height="7.7999999999999545" /><rect x="392.1" y="552.7" width="0.9" height="7.7999999999999545" /><rect x="397.7" y="552.7" width="0.9" height="7.7999999999999545" /><rect x="403.7" y="552.7" width="0.9" height="7.7999999999999545" /><rect x="409.7" y="552.7" width="0.9" height="7.7999999999999545" /><rect x="415.3" y="552.7" width="0.9" height="7.7999999999999545" /><rect x="421.3" y="552.7" width="0.9" height="7.7999999999999545" /><rect x="426.5" y="552.7" width="0.9" height="7.7999999999999545" /><rect x="432.1" y="552.7" width="0.9" height="7.7999999999999545" /><rect x="436.7" y="552.7" width="0.9" height="7.7999999999999545" /><rect x="442.3" y="552.7" width="0.9" height="7.7999999999999545" /><rect x="447.5" y="552.7" width="0.9" height="7.7999999999999545" /><rect x="453.1" y="552.7" width="0.9" height="7.7999999999999545" /><rect x="457.7" y="552.7" width="0.9" height="7.7999999999999545" /><rect x="462.9" y="552.7" width="0.9" height="7.7999999999999545" /><rect x="468.5" y="552.7" width="0.9" height="7.7999999999999545" /><rect x="474.1" y="552.7" width="0.9" height="7.7999999999999545" /><rect x="478.7" y="552.7" width="0.9" height="7.7999999999999545" /><rect x="483.3" y="552.7" width="0.9" height="7.7999999999999545" /><rect x="489.3" y="552.7" width="0.9" height="7.7999999999999545" /><rect x="495.3" y="552.7" width="0.9" height="7.7999999999999545" /><rect x="499.9" y="552.7" width="0.9" height="7.7999999999999545" /><rect x="505.5" y="552.7" width="0.9" height="7.7999999999999545" /><rect x="510.1" y="552.7" width="0.9" height="7.7999999999999545" /><rect x="516.1" y="552.7" width="0.9" height="7.7999999999999545" /><rect x="521.3" y="552.7" width="0.9" height="7.7999999999999545" /><rect x="525.9" y="552.7" width="0.9" height="7.7999999999999545" /><rect x="531.5" y="552.7" width="0.9" height="7.7999999999999545" /><rect x="537.5" y="552.7" width="0.9" height="7.7999999999999545" /><rect x="543.5" y="552.7" width="0.9" height="7.7999999999999545" /><rect x="548.1" y="552.7" width="0.9" height="7.7999999999999545" /><rect x="552.7" y="552.7" width="0.9" height="7.7999999999999545" /><rect x="557.3" y="552.7" width="0.9" height="7.7999999999999545" /><rect x="563.3" y="552.7" width="0.9" height="7.7999999999999545" /><rect x="568.9" y="552.7" width="0.9" height="7.7999999999999545" /><rect x="574.5" y="552.7" width="0.9" height="7.7999999999999545" /><rect x="579.7" y="552.7" width="0.9" height="7.7999999999999545" /><rect x="584.3" y="552.7" width="0.9" height="7.7999999999999545" /><rect x="589.9" y="552.7" width="0.9" height="7.7999999999999545" /><rect x="594.5" y="552.7" width="0.9" height="7.7999999999999545" /><rect x="599.1" y="552.7" width="0.9" height="7.7999999999999545" /><rect x="603.7" y="552.7" width="0.9" height="7.7999999999999545" /><rect x="608.3" y="552.7" width="0.9" height="7.7999999999999545" /><rect x="613.5" y="552.7" width="0.9" height="7.7999999999999545" /><rect x="619.5" y="552.7" width="0.9" height="7.7999999999999545" /><rect x="625.1" y="552.7" width="0.9" height="7.7999999999999545" /><rect x="630.7" y="552.7" width="0.9" height="7.7999999999999545" /><rect x="635.9" y="552.7" width="0.9" height="7.7999999999999545" /><rect x="640.5" y="552.7" width="0.9" height="7.7999999999999545" /><rect x="646.1" y="552.7" width="0.9" height="7.7999999999999545" /><rect x="651.7" y="552.7" width="0.9" height="7.7999999999999545" /><rect x="657.3" y="552.7" width="0.9" height="7.7999999999999545" /><rect x="662.5" y="552.7" width="0.9" height="7.7999999999999545" /><rect x="668.5" y="552.7" width="0.9" height="7.7999999999999545" /><rect x="674.5" y="552.7" width="0.9" height="7.7999999999999545" /><rect x="680.5" y="552.7" width="0.9" height="7.7999999999999545" /><rect x="686.5" y="552.7" width="0.9" height="7.7999999999999545" /><rect x="691.1" y="552.7" width="0.9" height="7.7999999999999545" /><rect x="696.7" y="552.7" width="0.9" height="7.7999999999999545" /><rect x="702.7" y="552.7" width="0.9" height="7.7999999999999545" /><rect x="707.9" y="552.7" width="0.9" height="7.7999999999999545" /><rect x="713.5" y="552.7" width="0.9" height="7.7999999999999545" /><rect x="719.5" y="552.7" width="0.9" height="7.7999999999999545" /><rect x="725.1" y="552.7" width="0.9" height="7.7999999999999545" /><rect x="730.7" y="552.7" width="0.9" height="7.7999999999999545" /><rect x="736.3" y="552.7" width="0.9" height="7.7999999999999545" /><rect x="740.9" y="552.7" width="0.9" height="7.7999999999999545" /><rect x="746.9" y="552.7" width="0.9" height="7.7999999999999545" /><rect x="752.5" y="552.7" width="0.9" height="7.7999999999999545" /><rect x="757.1" y="552.7" width="0.9" height="7.7999999999999545" /><rect x="763.1" y="552.7" width="0.9" height="7.7999999999999545" /><rect x="768.3" y="552.7" width="0.9" height="7.7999999999999545" /><rect x="772.9" y="552.7" width="0.9" height="7.7999999999999545" /><rect x="778.5" y="552.7" width="0.9" height="7.7999999999999545" /><rect x="784.5" y="552.7" width="0.9" height="7.7999999999999545" /><rect x="790.1" y="552.7" width="0.9" height="7.7999999999999545" /><rect x="795.7" y="552.7" width="0.9" height="7.7999999999999545" /><rect x="801.3" y="552.7" width="0.9" height="7.7999999999999545" /><rect x="807.3" y="552.7" width="0.9" height="7.7999999999999545" /><rect x="811.9" y="552.7" width="0.9" height="7.7999999999999545" /><rect x="816.5" y="552.7" width="0.9" height="7.7999999999999545" /><rect x="821.1" y="552.7" width="0.9" height="7.7999999999999545" /><rect x="826.7" y="552.7" width="0.9" height="7.7999999999999545" /></g>
<rect x="185" y="489.4" width="648" height="63.30000000000007" fill="#fdfca9"/>
<g clip-path="url(#cw)" fill="none" stroke="#9a9a4e" stroke-width="1.05">
<path d="M153.00 500.20 A10.8 10.8 0 0 1 174.60 500.20 L163.80 541.90 Z M142.20 541.90 A10.8 10.8 0 0 0 163.80 541.90 L153.00 500.20 Z M174.60 500.20 A10.8 10.8 0 0 1 196.20 500.20 L185.40 541.90 Z M163.80 541.90 A10.8 10.8 0 0 0 185.40 541.90 L174.60 500.20 Z M196.20 500.20 A10.8 10.8 0 0 1 217.80 500.20 L207.00 541.90 Z M185.40 541.90 A10.8 10.8 0 0 0 207.00 541.90 L196.20 500.20 Z M217.80 500.20 A10.8 10.8 0 0 1 239.40 500.20 L228.60 541.90 Z M207.00 541.90 A10.8 10.8 0 0 0 228.60 541.90 L217.80 500.20 Z M239.40 500.20 A10.8 10.8 0 0 1 261.00 500.20 L250.20 541.90 Z M228.60 541.90 A10.8 10.8 0 0 0 250.20 541.90 L239.40 500.20 Z M261.00 500.20 A10.8 10.8 0 0 1 282.60 500.20 L271.80 541.90 Z M250.20 541.90 A10.8 10.8 0 0 0 271.80 541.90 L261.00 500.20 Z M282.60 500.20 A10.8 10.8 0 0 1 304.20 500.20 L293.40 541.90 Z M271.80 541.90 A10.8 10.8 0 0 0 293.40 541.90 L282.60 500.20 Z M304.20 500.20 A10.8 10.8 0 0 1 325.80 500.20 L315.00 541.90 Z M293.40 541.90 A10.8 10.8 0 0 0 315.00 541.90 L304.20 500.20 Z M325.80 500.20 A10.8 10.8 0 0 1 347.40 500.20 L336.60 541.90 Z M315.00 541.90 A10.8 10.8 0 0 0 336.60 541.90 L325.80 500.20 Z M347.40 500.20 A10.8 10.8 0 0 1 369.00 500.20 L358.20 541.90 Z M336.60 541.90 A10.8 10.8 0 0 0 358.20 541.90 L347.40 500.20 Z M369.00 500.20 A10.8 10.8 0 0 1 390.60 500.20 L379.80 541.90 Z M358.20 541.90 A10.8 10.8 0 0 0 379.80 541.90 L369.00 500.20 Z M390.60 500.20 A10.8 10.8 0 0 1 412.20 500.20 L401.40 541.90 Z M379.80 541.90 A10.8 10.8 0 0 0 401.40 541.90 L390.60 500.20 Z M412.20 500.20 A10.8 10.8 0 0 1 433.80 500.20 L423.00 541.90 Z M401.40 541.90 A10.8 10.8 0 0 0 423.00 541.90 L412.20 500.20 Z M433.80 500.20 A10.8 10.8 0 0 1 455.40 500.20 L444.60 541.90 Z M423.00 541.90 A10.8 10.8 0 0 0 444.60 541.90 L433.80 500.20 Z M455.40 500.20 A10.8 10.8 0 0 1 477.00 500.20 L466.20 541.90 Z M444.60 541.90 A10.8 10.8 0 0 0 466.20 541.90 L455.40 500.20 Z M477.00 500.20 A10.8 10.8 0 0 1 498.60 500.20 L487.80 541.90 Z M466.20 541.90 A10.8 10.8 0 0 0 487.80 541.90 L477.00 500.20 Z M498.60 500.20 A10.8 10.8 0 0 1 520.20 500.20 L509.40 541.90 Z M487.80 541.90 A10.8 10.8 0 0 0 509.40 541.90 L498.60 500.20 Z M520.20 500.20 A10.8 10.8 0 0 1 541.80 500.20 L531.00 541.90 Z M509.40 541.90 A10.8 10.8 0 0 0 531.00 541.90 L520.20 500.20 Z M541.80 500.20 A10.8 10.8 0 0 1 563.40 500.20 L552.60 541.90 Z M531.00 541.90 A10.8 10.8 0 0 0 552.60 541.90 L541.80 500.20 Z M563.40 500.20 A10.8 10.8 0 0 1 585.00 500.20 L574.20 541.90 Z M552.60 541.90 A10.8 10.8 0 0 0 574.20 541.90 L563.40 500.20 Z M585.00 500.20 A10.8 10.8 0 0 1 606.60 500.20 L595.80 541.90 Z M574.20 541.90 A10.8 10.8 0 0 0 595.80 541.90 L585.00 500.20 Z M606.60 500.20 A10.8 10.8 0 0 1 628.20 500.20 L617.40 541.90 Z M595.80 541.90 A10.8 10.8 0 0 0 617.40 541.90 L606.60 500.20 Z M628.20 500.20 A10.8 10.8 0 0 1 649.80 500.20 L639.00 541.90 Z M617.40 541.90 A10.8 10.8 0 0 0 639.00 541.90 L628.20 500.20 Z M649.80 500.20 A10.8 10.8 0 0 1 671.40 500.20 L660.60 541.90 Z M639.00 541.90 A10.8 10.8 0 0 0 660.60 541.90 L649.80 500.20 Z M671.40 500.20 A10.8 10.8 0 0 1 693.00 500.20 L682.20 541.90 Z M660.60 541.90 A10.8 10.8 0 0 0 682.20 541.90 L671.40 500.20 Z M693.00 500.20 A10.8 10.8 0 0 1 714.60 500.20 L703.80 541.90 Z M682.20 541.90 A10.8 10.8 0 0 0 703.80 541.90 L693.00 500.20 Z M714.60 500.20 A10.8 10.8 0 0 1 736.20 500.20 L725.40 541.90 Z M703.80 541.90 A10.8 10.8 0 0 0 725.40 541.90 L714.60 500.20 Z M736.20 500.20 A10.8 10.8 0 0 1 757.80 500.20 L747.00 541.90 Z M725.40 541.90 A10.8 10.8 0 0 0 747.00 541.90 L736.20 500.20 Z M757.80 500.20 A10.8 10.8 0 0 1 779.40 500.20 L768.60 541.90 Z M747.00 541.90 A10.8 10.8 0 0 0 768.60 541.90 L757.80 500.20 Z M779.40 500.20 A10.8 10.8 0 0 1 801.00 500.20 L790.20 541.90 Z M768.60 541.90 A10.8 10.8 0 0 0 790.20 541.90 L779.40 500.20 Z M801.00 500.20 A10.8 10.8 0 0 1 822.60 500.20 L811.80 541.90 Z M790.20 541.90 A10.8 10.8 0 0 0 811.80 541.90 L801.00 500.20 Z M822.60 500.20 A10.8 10.8 0 0 1 844.20 500.20 L833.40 541.90 Z M811.80 541.90 A10.8 10.8 0 0 0 833.40 541.90 L822.60 500.20 Z "/>
</g>
<clipPath id="w250489"><rect x="250.2" y="489.4" width="47.5" height="63.3"/></clipPath>
<rect x="250.2" y="489.4" width="47.5" height="63.3" fill="#cdb08d" stroke="#9c8062" stroke-width="0.8"/>
<g clip-path="url(#w250489)" fill="none" stroke="#937456" stroke-width="0.95">
<circle cx="251.8" cy="520.8" r="1.6" stroke-width="0.9"/>
<circle cx="251.8" cy="520.8" r="5.9"/>
<circle cx="251.8" cy="520.8" r="11.8"/>
<circle cx="251.8" cy="520.8" r="17.7"/>
<circle cx="251.8" cy="520.8" r="23.6"/>
<circle cx="251.8" cy="520.8" r="29.5"/>
<circle cx="251.8" cy="520.8" r="35.4"/>
<circle cx="251.8" cy="520.8" r="41.3"/>
<circle cx="251.8" cy="520.8" r="47.2"/>
<circle cx="251.8" cy="520.8" r="53.1"/>
<circle cx="251.8" cy="520.8" r="59.0"/>
<circle cx="251.8" cy="520.8" r="64.9"/>
<circle cx="251.8" cy="520.8" r="70.8"/>
</g>
<clipPath id="w720489"><rect x="720.6" y="489.4" width="47.2" height="63.3"/></clipPath>
<rect x="720.6" y="489.4" width="47.2" height="63.3" fill="#cdb08d" stroke="#9c8062" stroke-width="0.8"/>
<g clip-path="url(#w720489)" fill="none" stroke="#937456" stroke-width="0.95">
<circle cx="722.2" cy="520.8" r="1.6" stroke-width="0.9"/>
<circle cx="722.2" cy="520.8" r="5.9"/>
<circle cx="722.2" cy="520.8" r="11.8"/>
<circle cx="722.2" cy="520.8" r="17.7"/>
<circle cx="722.2" cy="520.8" r="23.6"/>
<circle cx="722.2" cy="520.8" r="29.5"/>
<circle cx="722.2" cy="520.8" r="35.4"/>
<circle cx="722.2" cy="520.8" r="41.3"/>
<circle cx="722.2" cy="520.8" r="47.2"/>
<circle cx="722.2" cy="520.8" r="53.1"/>
<circle cx="722.2" cy="520.8" r="59.0"/>
<circle cx="722.2" cy="520.8" r="64.9"/>
<circle cx="722.2" cy="520.8" r="70.8"/>
</g>
<clipPath id="w260462"><rect x="260.8" y="462.7" width="25.8" height="26.7"/></clipPath>
<rect x="260.8" y="462.7" width="25.8" height="26.7" fill="#cdb08d" stroke="#9c8062" stroke-width="0.8"/>
<g clip-path="url(#w260462)" fill="none" stroke="#937456" stroke-width="0.95">
<circle cx="262.3" cy="476.1" r="1.6" stroke-width="0.9"/>
<circle cx="262.3" cy="476.1" r="5.4"/>
<circle cx="262.3" cy="476.1" r="10.8"/>
<circle cx="262.3" cy="476.1" r="16.2"/>
<circle cx="262.3" cy="476.1" r="21.6"/>
<circle cx="262.3" cy="476.1" r="27.0"/>
<circle cx="262.3" cy="476.1" r="32.4"/>
<circle cx="262.3" cy="476.1" r="37.8"/>
</g>
<clipPath id="w731462"><rect x="731.6" y="462.7" width="25.8" height="26.7"/></clipPath>
<rect x="731.6" y="462.7" width="25.8" height="26.7" fill="#cdb08d" stroke="#9c8062" stroke-width="0.8"/>
<g clip-path="url(#w731462)" fill="none" stroke="#937456" stroke-width="0.95">
<circle cx="733.1" cy="476.1" r="1.6" stroke-width="0.9"/>
<circle cx="733.1" cy="476.1" r="5.4"/>
<circle cx="733.1" cy="476.1" r="10.8"/>
<circle cx="733.1" cy="476.1" r="16.2"/>
<circle cx="733.1" cy="476.1" r="21.6"/>
<circle cx="733.1" cy="476.1" r="27.0"/>
<circle cx="733.1" cy="476.1" r="32.4"/>
<circle cx="733.1" cy="476.1" r="37.8"/>
</g>
<polyline fill="none" stroke="#4a4a4a" stroke-width="1.5" stroke-linejoin="miter" points="185.0,462.7 218.6,462.7 225.8,441.6 237.1,441.6 244.8,462.7 311.6,462.7 318.8,441.6 330.1,441.6 337.8,462.7 404.6,462.7 411.8,441.6 423.1,441.6 430.8,462.7 497.6,462.7 504.8,441.6 516.1,441.6 523.8,462.7 590.6,462.7 597.8,441.6 609.1,441.6 616.8,462.7 683.6,462.7 690.8,441.6 702.1,441.6 709.8,462.7 776.6,462.7 783.8,441.6 795.1,441.6 802.8,462.7 833.0,462.7"/>
<g fill="none" stroke="#a9a9a9" stroke-width="1.1">
<ellipse cx="187.4" cy="476" rx="3.1" ry="3.5"/>
<ellipse cx="195.2" cy="476" rx="3.1" ry="3.5"/>
<ellipse cx="203.0" cy="476" rx="3.1" ry="3.5"/>
<ellipse cx="344.4" cy="476" rx="3.1" ry="3.5"/>
<ellipse cx="352.2" cy="476" rx="3.1" ry="3.5"/>
<ellipse cx="360.0" cy="476" rx="3.1" ry="3.5"/>
<ellipse cx="422.4" cy="476" rx="3.1" ry="3.5"/>
<ellipse cx="430.2" cy="476" rx="3.1" ry="3.5"/>
<ellipse cx="438.0" cy="476" rx="3.1" ry="3.5"/>
<ellipse cx="500.4" cy="476" rx="3.1" ry="3.5"/>
<ellipse cx="508.2" cy="476" rx="3.1" ry="3.5"/>
<ellipse cx="516.0" cy="476" rx="3.1" ry="3.5"/>
<ellipse cx="579.4" cy="476" rx="3.1" ry="3.5"/>
<ellipse cx="587.2" cy="476" rx="3.1" ry="3.5"/>
<ellipse cx="595.0" cy="476" rx="3.1" ry="3.5"/>
<ellipse cx="657.4" cy="476" rx="3.1" ry="3.5"/>
<ellipse cx="665.2" cy="476" rx="3.1" ry="3.5"/>
<ellipse cx="673.0" cy="476" rx="3.1" ry="3.5"/>
<ellipse cx="814.4" cy="476" rx="3.1" ry="3.5"/>
<ellipse cx="822.2" cy="476" rx="3.1" ry="3.5"/>
<ellipse cx="830.0" cy="476" rx="3.1" ry="3.5"/>
</g>
<g fill="#fff" stroke="#333" stroke-width="1.2">
<circle cx="490.3" cy="452.4" r="9.2"/>
<circle cx="490.3" cy="476" r="9.2"/>
<circle cx="490.3" cy="521" r="9.2"/>
<circle cx="490.3" cy="557" r="9.2"/>
</g><g font-family="Liberation Sans" font-size="12.5" fill="#222" text-anchor="middle">
<text x="490.3" y="456.9">4</text>
<text x="490.3" y="480.5">3</text>
<text x="490.3" y="525.5">2</text>
<text x="490.3" y="561.5">1</text>
</g>
<g font-family="Liberation Sans" font-size="13" fill="#9a9a9a"><text x="509" y="436" text-anchor="middle">Außen</text><text x="509.5" y="577" text-anchor="middle">Innen</text></g>
<text x="833" y="577" font-family="Liberation Sans" font-size="13" fill="#c4c4c4" text-anchor="end">ubakus.de</text>
<g stroke="#666" stroke-width="1">
<line x1="827.5" y1="456.5" x2="853.5" y2="456.5"/>
<line x1="827.5" y1="483.5" x2="853.5" y2="483.5"/>
<line x1="762.5" y1="510.5" x2="853.5" y2="510.5"/>
<line x1="827.5" y1="533.5" x2="853.5" y2="533.5"/>
<line x1="827.5" y1="555.5" x2="853.5" y2="555.5"/>
</g><g fill="#333">
<circle cx="827.5" cy="456.5" r="1"/>
<circle cx="827.5" cy="483.5" r="1"/>
<circle cx="762.5" cy="510.5" r="1"/>
<circle cx="827.5" cy="533.5" r="1"/>
<circle cx="827.5" cy="555.5" r="1"/>
</g>
<g font-family="Liberation Sans" font-size="13" fill="#3c3c3c">
<text x="857" y="460">Trapezblech (40mm)</text>
<text x="857" y="487">Hinterlüftung (Außenluft) (50mm)</text>
<text x="857" y="514.5">Sparren (Fichte) (120x90mm²)</text>
<text x="857" y="537">Glaswolle (120mm)</text>
<text x="857" y="560">OSB-Platte (15mm)</text>
</g>
<g stroke="#777" stroke-width="1.1"><line x1="249.7" y1="588.4" x2="720.6" y2="588.4"/>
<line x1="249.7" y1="583.5" x2="249.7" y2="593.5"/>
<line x1="297.5" y1="583.5" x2="297.5" y2="593.5"/>
<line x1="720.6" y1="583.5" x2="720.6" y2="593.5"/>
</g><g font-family="Liberation Sans" font-size="13" fill="#8a8a8a" text-anchor="middle"><text x="273.6" y="604">90</text><text x="509" y="604">800</text></g>
</svg>
<div class="a t" style="left:494px;top:697px;font-size:12px;line-height:14px;color:#8c1c1c;letter-spacing:0.09px">Gewerbliche Nutzung nur mit kostenpflichtigem Zugang. <span style="color:#4f8a2e">Weitere Infos</span></div><div id="bot" class="a"></div>
<div class="a" style="left:8.7px;top:732px;width:0;height:0;border-left:6px solid transparent;border-right:6px solid transparent;border-top:10px solid #f4f4f4"></div>
<div class="a t" style="left:177.5px;top:730.11px;font-size:19.3px;line-height:22.2px;color:#f2f2f2;">U-Wert: </div>
<div class="a t" style="left:249.5px;top:726.71px;font-size:23px;line-height:26.45px;color:#f2f2f2;">0,355</div>
<div class="a t" style="left:314px;top:736.02px;font-size:13px;line-height:14.95px;color:#f2f2f2;">W/m²K</div>
<svg class="a" style="left:370px;top:728px" width="26" height="26" viewBox="370 728 26 26"><path d="M381.8 741 L390.2 748.4" stroke="#bdbdbd" stroke-width="2.9" stroke-linecap="round"/><circle cx="379.8" cy="738.8" r="4.4" fill="#bdbdbd"/><rect x="-1.6" y="-3.2" width="3.2" height="6.4" fill="#505050" transform="translate(377.3,736.3) rotate(-45)"/></svg>
<div class="a" style="left:178px;top:760px;width:216px;height:9px;background:rgba(0,0,0,.05);border-top:1px solid rgba(0,0,0,.12)"></div>
<div class="a" style="left:178px;top:760px;width:77px;height:9px;background:#b82219;border-top:1px solid #c8463c"></div>
<div class="a" style="left:178px;top:769px;width:216px;height:1.4px;background:#7d7d7d"></div>
<div class="a" style="left:178px;top:770.4px;width:216px;height:2.4px;background:linear-gradient(90deg,#76a24a 0,#76a24a 20%,#a3261c 20.3%,#a3261c 100%)"></div>
<div class="a" style="left:392.8px;top:759.5px;width:1.2px;height:13.3px;background:#8a8a8a"></div>
<div class="a t" style="left:177.5px;top:780.54px;font-size:12px;line-height:13.8px;color:#f0f0f0;">EnEV Bestand: U ≤ 0.2*</div>
<div class="a" style="left:312px;top:778.5px;width:14.3px;height:13.3px;background:#d0d0d0"></div><div class="a" style="left:314.7px;top:781.5px;width:0;height:0;border-left:4.5px solid transparent;border-right:4.5px solid transparent;border-top:8px solid #333"></div>
<div class="a t" style="left:177.5px;top:805.94px;font-size:12px;line-height:13.8px;color:#e8e8e8;">Beitrag zum Treibhauseffekt:</div>
<div class="a qm" style="left:379.5px;top:803.0px">?</div>
<div class="a" style="left:178px;top:821px;width:216px;height:6px;background:rgba(0,0,0,.05);border-top:1px solid rgba(0,0,0,.12)"></div>
<div class="a" style="left:178px;top:821px;width:146px;height:6px;background:#d6cf40"></div>
<div class="a" style="left:178px;top:827px;width:216px;height:1.4px;background:#7d7d7d"></div>
<div class="a" style="left:178px;top:828.6px;width:216px;height:2.1px;background:linear-gradient(90deg,#76a24a 0,#76a24a 55%,#c6b634 80%,#cc862a 90%,#a3261c 100%)"></div>
<div class="a" style="left:392.8px;top:820.5px;width:1.2px;height:10.3px;background:#8a8a8a"></div>
<div class="a t" style="left:177.5px;top:838.86px;font-size:11px;line-height:12.65px;color:#c0c0c0;">sehr gut</div>
<div class="a t" style="right:886px;top:838.86px;font-size:11px;line-height:12.65px;color:#c0c0c0;text-align:right;">mangelhaft</div>
<div class="a t" style="left:413.5px;top:730.74px;font-size:12px;line-height:13.8px;color:#e8e8e8;">Tauwasser: 0 kg/m²</div>
<div class="a qm" style="left:615.5px;top:728.5px">?</div>
<div class="a" style="left:414px;top:746px;width:216px;height:6px;background:rgba(0,0,0,.05);border-top:1px solid rgba(0,0,0,.12)"></div>
<div class="a" style="left:414px;top:746px;width:3px;height:6px;background:#8fc060"></div>
<div class="a" style="left:414px;top:752px;width:216px;height:1.4px;background:#7d7d7d"></div>
<div class="a" style="left:414px;top:753.6px;width:216px;height:2.1px;background:linear-gradient(90deg,#76a24a 0,#76a24a 50%,#c6b634 75%,#cc862a 88%,#a3261c 100%)"></div>
<div class="a" style="left:628.8px;top:745.5px;width:1.2px;height:10.3px;background:#8a8a8a"></div>
<div class="a t" style="left:413.5px;top:768.64px;font-size:12px;line-height:13.8px;color:#e8e8e8;">Holzfeuchte: +0,0 %</div>
<div class="a qm" style="left:615.5px;top:765.9px">?</div>
<div class="a" style="left:414px;top:784px;width:216px;height:6px;background:rgba(0,0,0,.05);border-top:1px solid rgba(0,0,0,.12)"></div>
<div class="a" style="left:414px;top:784px;width:3px;height:6px;background:#8fc060"></div>
<div class="a" style="left:414px;top:790px;width:216px;height:1.4px;background:#7d7d7d"></div>
<div class="a" style="left:414px;top:791.6px;width:216px;height:2.1px;background:linear-gradient(90deg,#76a24a 0,#76a24a 22%,#c6b634 33%,#cc862a 43%,#a3261c 52%,#a3261c 100%)"></div>
<div class="a" style="left:628.8px;top:783.5px;width:1.2px;height:10.3px;background:#8a8a8a"></div>
<div class="a t" style="left:413.5px;top:805.94px;font-size:12px;line-height:13.8px;color:#e8e8e8;">Trocknungsdauer: -</div>
<div class="a qm" style="left:615.5px;top:803.5px">?</div>
<div class="a" style="left:414px;top:821px;width:216px;height:6px;background:rgba(0,0,0,.05);border-top:1px solid rgba(0,0,0,.12)"></div>
<div class="a" style="left:414px;top:821px;width:3px;height:6px;background:#8fc060"></div>
<div class="a" style="left:414px;top:827px;width:216px;height:1.4px;background:#7d7d7d"></div>
<div class="a" style="left:414px;top:828.6px;width:216px;height:2.1px;background:linear-gradient(90deg,#76a24a 0,#76a24a 40%,#c6b634 65%,#cc862a 85%,#a3261c 100%)"></div>
<div class="a" style="left:628.8px;top:820.5px;width:1.2px;height:10.3px;background:#8a8a8a"></div>
<div class="a t" style="left:413.5px;top:838.86px;font-size:11px;line-height:12.65px;color:#c0c0c0;">sehr gut</div>
<div class="a t" style="right:650px;top:838.86px;font-size:11px;line-height:12.65px;color:#c0c0c0;text-align:right;">mangelhaft</div>
<div class="a t" style="left:649.5px;top:730.24px;font-size:12px;line-height:13.8px;color:#e8e8e8;">sd-Wert: 0,75 m</div>
<div class="a t" style="right:413.5px;top:730.24px;font-size:12px;line-height:13.8px;color:#e8e8e8;text-align:right;">Dicke: 22,5 cm</div>
<div class="a t" style="right:413.5px;top:747.44px;font-size:12px;line-height:13.8px;color:#e8e8e8;text-align:right;">Gewicht: 21 kg/m²</div>
<div class="a t" style="left:649.5px;top:766.24px;font-size:12px;line-height:13.8px;color:#e8e8e8;">Oberfläche innen: 16,0°C (64%)</div>
<div class="a qm" style="left:852.0px;top:765.0px">?</div>
<div class="a" style="left:650px;top:782px;width:216.5px;height:6px;background:rgba(0,0,0,.05);border-top:1px solid rgba(0,0,0,.12)"></div>
<div class="a" style="left:650px;top:782px;width:78px;height:6px;background:#93c862"></div>
<div class="a" style="left:650px;top:788px;width:216.5px;height:1.4px;background:#7d7d7d"></div>
<div class="a" style="left:650px;top:789.6px;width:216.5px;height:2.1px;background:linear-gradient(90deg,#a3261c 0,#a3261c 8%,#cc862a 16%,#c6b634 24%,#76a24a 40%,#76a24a 100%)"></div>
<div class="a" style="left:865.3px;top:781.5px;width:1.2px;height:10.3px;background:#8a8a8a"></div>
<div class="a t" style="left:649.5px;top:803.74px;font-size:12px;line-height:13.8px;color:#e8e8e8;">Trocknungsreserve: 27186 g/m²a</div>
<div class="a qm" style="left:852.0px;top:801.5px">?</div>
<div class="a" style="left:650px;top:819.4px;width:216.5px;height:6px;background:rgba(0,0,0,.05);border-top:1px solid rgba(0,0,0,.12)"></div>
<div class="a" style="left:650px;top:819.4px;width:216.5px;height:6px;background:#93c862"></div>
<div class="a" style="left:650px;top:825.4px;width:216.5px;height:1.4px;background:#7d7d7d"></div>
<div class="a" style="left:650px;top:827.0px;width:216.5px;height:2.1px;background:linear-gradient(90deg,#a3261c 0,#a3261c 38%,#cc862a 46%,#c6b634 52%,#76a24a 62%,#76a24a 100%)"></div>
<div class="a" style="left:865.3px;top:818.9px;width:1.2px;height:10.3px;background:#8a8a8a"></div>
<div class="a t" style="left:649.5px;top:837.46px;font-size:11px;line-height:12.65px;color:#c0c0c0;">mangelhaft</div>
<div class="a t" style="right:413.5px;top:837.46px;font-size:11px;line-height:12.65px;color:#c0c0c0;text-align:right;">sehr gut</div>
<div class="a t" style="left:885.5px;top:730.54px;font-size:12px;line-height:13.8px;color:#e8e8e8;">Temp.Ampl.Dämpfung (1/TAV): 3,9</div>
<div class="a qm" style="left:1088.0px;top:729.0px">?</div>
<div class="a" style="left:886px;top:746.3px;width:217px;height:6px;background:rgba(0,0,0,.05);border-top:1px solid rgba(0,0,0,.12)"></div>
<div class="a" style="left:886px;top:746.3px;width:43.5px;height:6px;background:#d6cf40"></div>
<div class="a" style="left:886px;top:752.3px;width:217px;height:1.4px;background:#7d7d7d"></div>
<div class="a" style="left:886px;top:753.9px;width:217px;height:2.1px;background:linear-gradient(90deg,#a3261c 0,#cc862a 8%,#c6b634 16%,#76a24a 40%,#76a24a 100%)"></div>
<div class="a" style="left:1101.8px;top:745.8px;width:1.2px;height:10.3px;background:#8a8a8a"></div>
<div class="a t" style="left:885.5px;top:767.94px;font-size:12px;line-height:13.8px;color:#e8e8e8;">Phasenverschiebung: 5,3 h</div>
<div class="a qm" style="left:1088.0px;top:766.5px">?</div>
<div class="a" style="left:886px;top:784px;width:217px;height:6px;background:rgba(0,0,0,.05);border-top:1px solid rgba(0,0,0,.12)"></div>
<div class="a" style="left:886px;top:784px;width:64px;height:6px;background:#d6cf40"></div>
<div class="a" style="left:886px;top:790px;width:217px;height:1.4px;background:#7d7d7d"></div>
<div class="a" style="left:886px;top:791.6px;width:217px;height:2.1px;background:linear-gradient(90deg,#a3261c 0,#cc862a 6%,#c6b634 14%,#76a24a 45%,#76a24a 100%)"></div>
<div class="a" style="left:1101.8px;top:783.5px;width:1.2px;height:10.3px;background:#8a8a8a"></div>
<div class="a t" style="left:885.5px;top:804.64px;font-size:12px;line-height:13.8px;color:#e8e8e8;">Speicherfähigkeit innen: 19.6 kJ/m²K</div>
<div class="a qm" style="left:1088.0px;top:803.5px">?</div>
<div class="a" style="left:886px;top:821px;width:217px;height:6px;background:rgba(0,0,0,.05);border-top:1px solid rgba(0,0,0,.12)"></div>
<div class="a" style="left:886px;top:821px;width:42.5px;height:6px;background:#e0a232"></div>
<div class="a" style="left:886px;top:827px;width:217px;height:1.4px;background:#7d7d7d"></div>
<div class="a" style="left:886px;top:828.6px;width:217px;height:2.1px;background:linear-gradient(90deg,#a3261c 0,#cc862a 8%,#c6b634 25%,#76a24a 55%,#76a24a 100%)"></div>
<div class="a" style="left:1101.8px;top:820.5px;width:1.2px;height:10.3px;background:#8a8a8a"></div>
<div class="a t" style="left:885.5px;top:837.26px;font-size:11px;line-height:12.65px;color:#c0c0c0;">mangelhaft</div>
<div class="a t" style="right:177px;top:837.26px;font-size:11px;line-height:12.65px;color:#c0c0c0;text-align:right;">sehr gut</div>
</body></html>
